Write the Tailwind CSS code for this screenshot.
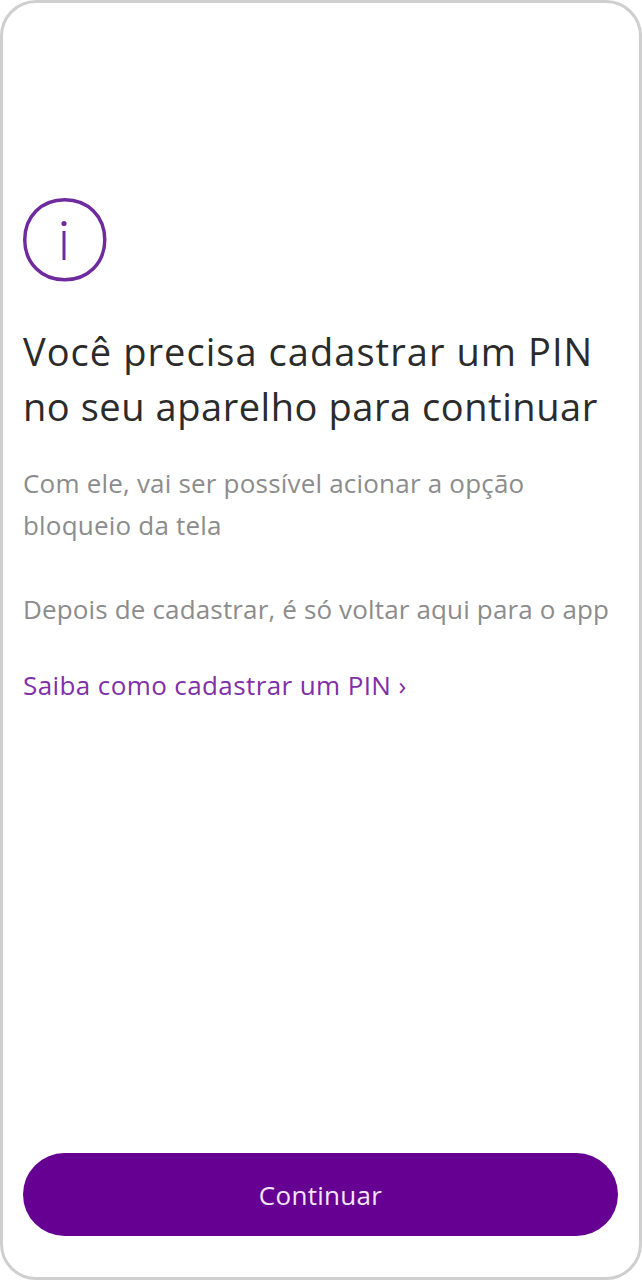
<!DOCTYPE html>
<html lang="pt-BR">
<head>
  <meta charset="UTF-8" />
  <meta name="viewport" content="width=device-width, initial-scale=1.0" />
  <title>Cadastrar PIN</title>
  <script src="https://cdn.jsdelivr.net/npm/@tailwindcss/browser@4"></script>
</head>
<body class="bg-white font-['Open_Sans',sans-serif]">
  <div class="w-[642px] h-[1280px] border-[3px] border-[#cfcfcf] rounded-[36px] bg-white flex flex-col justify-between pt-[195px] pb-[41px] pl-[20px] pr-[22px] overflow-hidden">
    <div>
      <!-- icone info -->
      <svg class="block w-[84px] h-[84px]" viewBox="0 0 84 84" fill="none" stroke="#6f2a9e">
        <path d="M41.75 1.75C65 1.75 81.75 18.5 81.75 41.75S65 81.75 41.75 81.75 1.75 65 1.75 41.75 18.5 1.75 41.75 1.75Z" stroke-width="3.5" />
        <circle cx="41" cy="25.5" r="2.6" fill="#6f2a9e" stroke="none" />
        <path d="M41 33V62" stroke-width="3" />
      </svg>

      <h1 class="mt-[42px] text-[38px] leading-[55px] text-[#2b2b2b] whitespace-nowrap">
        <span class="tracking-[1.05px]">Você precisa cadastrar um PIN</span><br />
        <span class="tracking-[0.55px]">no seu aparelho para continuar</span>
      </h1>

      <p class="mt-[28px] text-[26px] leading-[42px] tracking-[0.2px] text-[#8c8c8c]">Com ele, vai ser possível acionar a opção<br />bloqueio da tela</p>
      <p class="mt-[42px] text-[26px] leading-[42px] tracking-[0.15px] text-[#8c8c8c] whitespace-nowrap">Depois de cadastrar, é só voltar aqui para o app</p>

      <a class="block mt-[34px] text-[26px] leading-[42px] tracking-[0.4px] text-[#7f2fa8]">Saiba como cadastrar um PIN ›</a>
    </div>

    <button class="w-[595px] h-[83px] pt-[2px] rounded-full bg-[#660092] text-[#f3e6f8] text-[26px] tracking-[0.3px]">Continuar</button>
  </div>
</body>
</html>
